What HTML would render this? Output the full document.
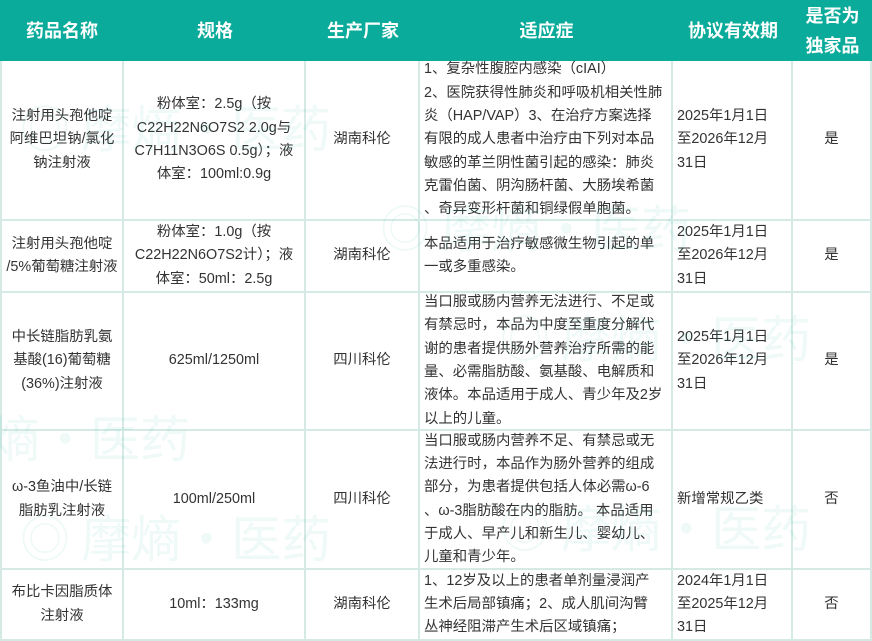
<!DOCTYPE html>
<html><head><meta charset="utf-8">
<style>
*{margin:0;padding:0;box-sizing:border-box}
body{width:872px;height:641px;overflow:hidden;background:#fff;font-family:"Liberation Sans","Noto Sans CJK SC",sans-serif;color:#333;position:relative}
.c{position:absolute;display:flex;align-items:center;font-size:14.4px;line-height:23.3px;white-space:nowrap;border-right:2px solid #d6eae5;border-bottom:2px solid #d6eae5}
.ctr{justify-content:center;text-align:center}
.lft{justify-content:flex-start;text-align:left;padding-left:4px}
.h{position:absolute;top:0;height:61px;background:#0aab9a;color:#fff;font-weight:bold;font-size:18px;line-height:30px;display:flex;align-items:center;justify-content:center;text-align:center}
.wm{position:absolute;font-size:50px;color:rgba(10,171,154,0.07);white-space:nowrap;font-family:"Noto Sans CJK SC",sans-serif;z-index:5;pointer-events:none}
</style></head><body>
<div style="position:absolute;left:0;top:61px;width:2px;height:580px;background:#d6eae5"></div>
<div class="h" style="left:0;width:872px"></div>
<div class="h" style="left:0;width:124px">药品名称</div>
<div class="h" style="left:124px;width:182px">规格</div>
<div class="h" style="left:306px;width:114px">生产厂家</div>
<div class="h" style="left:420px;width:253px">适应症</div>
<div class="h" style="left:673px;width:120px">协议有效期</div>
<div class="h" style="left:793px;width:79px">是否为<br>独家品</div>

<!-- row1 -->
<div class="c ctr" style="left:2px;top:61px;width:122px;height:160px">注射用头孢他啶<br>阿维巴坦钠/氯化<br>钠注射液</div>
<div class="c ctr" style="left:124px;top:61px;width:182px;height:160px">粉体室：2.5g（按<br>C22H22N6O7S2 2.0g与<br>C7H11N3O6S 0.5g）；液<br>体室：100ml:0.9g</div>
<div class="c ctr" style="left:306px;top:61px;width:114px;height:160px">湖南科伦</div>
<div class="c lft" style="left:420px;top:61px;width:253px;height:160px">1、复杂性腹腔内感染（cIAI）<br>2、医院获得性肺炎和呼吸机相关性肺<br>炎（HAP/VAP）3、在治疗方案选择<br>有限的成人患者中治疗由下列对本品<br>敏感的革兰阴性菌引起的感染：肺炎<br>克雷伯菌、阴沟肠杆菌、大肠埃希菌<br>、奇异变形杆菌和铜绿假单胞菌。</div>
<div class="c lft" style="left:673px;top:61px;width:120px;height:160px">2025年1月1日<br>至2026年12月<br>31日</div>
<div class="c ctr" style="left:793px;top:61px;width:79px;height:160px">是</div>
<!-- row2 -->
<div class="c ctr" style="left:2px;top:221px;width:122px;height:72px">注射用头孢他啶<br>/5%葡萄糖注射液</div>
<div class="c ctr" style="left:124px;top:221px;width:182px;height:72px">粉体室：1.0g（按<br>C22H22N6O7S2计）；液<br>体室：50ml：2.5g</div>
<div class="c ctr" style="left:306px;top:221px;width:114px;height:72px">湖南科伦</div>
<div class="c lft" style="left:420px;top:221px;width:253px;height:72px">本品适用于治疗敏感微生物引起的单<br>一或多重感染。</div>
<div class="c lft" style="left:673px;top:221px;width:120px;height:72px">2025年1月1日<br>至2026年12月<br>31日</div>
<div class="c ctr" style="left:793px;top:221px;width:79px;height:72px">是</div>
<!-- row3 -->
<div class="c ctr" style="left:2px;top:293px;width:122px;height:138px">中长链脂肪乳氨<br>基酸(16)葡萄糖<br>(36%)注射液</div>
<div class="c ctr" style="left:124px;top:293px;width:182px;height:138px">625ml/1250ml</div>
<div class="c ctr" style="left:306px;top:293px;width:114px;height:138px">四川科伦</div>
<div class="c lft" style="left:420px;top:293px;width:253px;height:138px">当口服或肠内营养无法进行、不足或<br>有禁忌时，本品为中度至重度分解代<br>谢的患者提供肠外营养治疗所需的能<br>量、必需脂肪酸、氨基酸、电解质和<br>液体。本品适用于成人、青少年及2岁<br>以上的儿童。</div>
<div class="c lft" style="left:673px;top:293px;width:120px;height:138px">2025年1月1日<br>至2026年12月<br>31日</div>
<div class="c ctr" style="left:793px;top:293px;width:79px;height:138px">是</div>
<!-- row4 -->
<div class="c ctr" style="left:2px;top:431px;width:122px;height:139px">ω-3鱼油中/长链<br>脂肪乳注射液</div>
<div class="c ctr" style="left:124px;top:431px;width:182px;height:139px">100ml/250ml</div>
<div class="c ctr" style="left:306px;top:431px;width:114px;height:139px">四川科伦</div>
<div class="c lft" style="left:420px;top:431px;width:253px;height:139px">当口服或肠内营养不足、有禁忌或无<br>法进行时，本品作为肠外营养的组成<br>部分，为患者提供包括人体必需ω-6<br>、ω-3脂肪酸在内的脂肪。 本品适用<br>于成人、早产儿和新生儿、婴幼儿、<br>儿童和青少年。</div>
<div class="c lft" style="left:673px;top:431px;width:120px;height:139px">新增常规乙类</div>
<div class="c ctr" style="left:793px;top:431px;width:79px;height:139px">否</div>
<!-- row5 -->
<div class="c ctr" style="left:2px;top:570px;width:122px;height:71px">布比卡因脂质体<br>注射液</div>
<div class="c ctr" style="left:124px;top:570px;width:182px;height:71px">10ml：133mg</div>
<div class="c ctr" style="left:306px;top:570px;width:114px;height:71px">湖南科伦</div>
<div class="c lft" style="left:420px;top:570px;width:253px;height:71px">1、12岁及以上的患者单剂量浸润产<br>生术后局部镇痛；2、成人肌间沟臂<br>丛神经阻滞产生术后区域镇痛；</div>
<div class="c lft" style="left:673px;top:570px;width:120px;height:71px">2024年1月1日<br>至2025年12月<br>31日</div>
<div class="c ctr" style="left:793px;top:570px;width:79px;height:71px">否</div>

<div class="wm" style="left:20px;top:90px">◎ 摩熵·医药</div>
<div class="wm" style="left:380px;top:190px">◎ 摩熵·医药</div>
<div class="wm" style="left:500px;top:300px">◎ 摩熵·医药</div>
<div class="wm" style="left:-60px;top:400px">摩熵·医药</div>
<div class="wm" style="left:20px;top:500px">◎ 摩熵·医药</div>
<div class="wm" style="left:500px;top:490px">◎ 摩熵·医药</div>
</body></html>
